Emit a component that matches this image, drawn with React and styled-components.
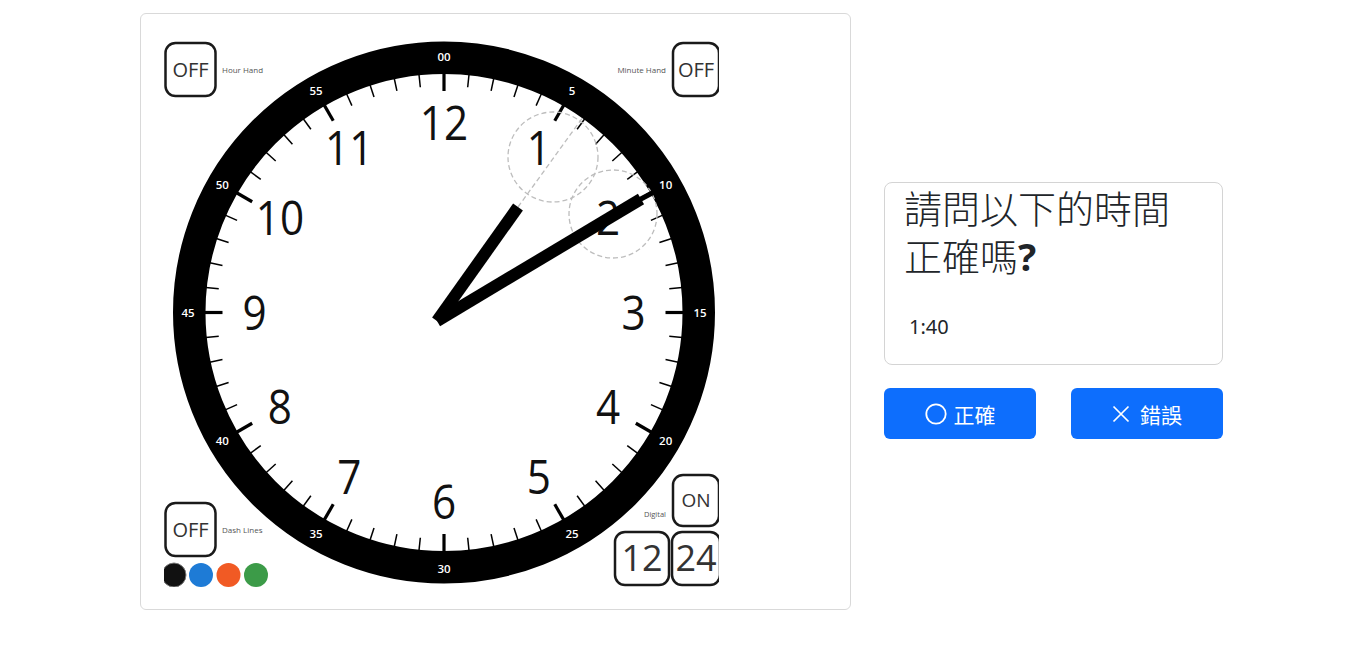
import React from 'react';
import styled, { createGlobalStyle } from 'styled-components';

const GlobalStyle = createGlobalStyle`
  body {
    margin: 0;
    background: #ffffff;
    color: #212529;
    font-family: "Noto Sans", "Noto Sans CJK TC", sans-serif;
  }
`;

// clock geometry, in svg coordinates (image is 555 x 549)
const CX = 280;
const CY = 274.5;
const RING_OUTER = 271;
const RING_INNER = 238.5;
const NUM_R = 189.5;
const LABEL_R = 256;

const polar = (r, deg) => {
  const a = (deg * Math.PI) / 180;
  return [CX + r * Math.sin(a), CY - r * Math.cos(a)];
};

const ticks = Array.from({ length: 60 }, (_, i) => {
  const major = i % 5 === 0;
  const [x1, y1] = polar(RING_INNER + 1, i * 6);
  const [x2, y2] = polar(major ? RING_INNER - 17 : RING_INNER - 12, i * 6);
  return { i, major, x1, y1, x2, y2 };
});

const hours = Array.from({ length: 12 }, (_, i) => {
  const h = i + 1;
  const [x, y] = polar(NUM_R, h * 30);
  return { h, x, y };
});

const minuteLabels = Array.from({ length: 12 }, (_, i) => {
  const [x, y] = polar(LABEL_R, i * 30);
  return { text: i === 0 ? '00' : String(i * 5), x, y };
});

function ToggleBox({ x, y, w, h, label, size }) {
  return (
    <g>
      <rect
        x={x}
        y={y}
        width={w}
        height={h}
        rx="10"
        fill="#fff"
        stroke="#1a1a1a"
        strokeWidth="2.5"
      />
      <text
        x={x + w / 2}
        y={y + h / 2 + size * 0.36}
        textAnchor="middle"
        fontSize={size}
        fill="#333"
        fontFamily="'Open Sans', sans-serif"
      >
        {label}
      </text>
    </g>
  );
}

function Clock() {
  return (
    <svg width="555" height="549" viewBox="0 0 555 549">
      <rect width="555" height="549" fill="#fff" />
      <circle
        cx={CX}
        cy={CY}
        r={(RING_OUTER + RING_INNER) / 2}
        fill="none"
        stroke="#000"
        strokeWidth={RING_OUTER - RING_INNER}
      />
      {ticks.map((t) => (
        <line
          key={t.i}
          x1={t.x1}
          y1={t.y1}
          x2={t.x2}
          y2={t.y2}
          stroke="#000"
          strokeWidth={t.major ? 3.2 : 1.5}
        />
      ))}
      {minuteLabels.map((l) => (
        <text
          key={l.text}
          x={l.x}
          y={l.y + 4}
          textAnchor="middle"
          fontSize="11.5"
          fontWeight="600"
          fill="#fff"
          fontFamily="'Open Sans', sans-serif"
        >
          {l.text}
        </text>
      ))}

      {/* dashed helper lines */}
      <g fill="none" stroke="#bdbdbd" strokeWidth="1.3" strokeDasharray="5 3">
        <circle cx="389" cy="119" r="45" />
        <circle cx="449" cy="176" r="44" />
        <line x1="354" y1="169" x2="418" y2="80.5" />
      </g>

      {hours.map((n) => (
        <g key={n.h} transform={`translate(${n.x} ${n.y}) scale(0.88 1)`}>
          <text
            x="0"
            y="17"
            textAnchor="middle"
            fontSize="48"
            fill="#111"
            fontFamily="'Open Sans', sans-serif"
          >
            {n.h}
          </text>
        </g>
      ))}

      {/* hands */}
      <line x1="273" y1="283" x2="354" y2="169" stroke="#000" strokeWidth="12" />
      <line x1="273" y1="283" x2="477" y2="161" stroke="#000" strokeWidth="12" />
      <line x1="476" y1="161.5" x2="490" y2="154" stroke="#000" strokeWidth="5" />

      {/* controls */}
      <ToggleBox x={1.5} y={5} w={50} h={53} label="OFF" size={20} />
      <text x="58" y="35" fontSize="8" fill="#555" fontFamily="'Open Sans', sans-serif">
        Hour Hand
      </text>
      <text
        x="502"
        y="35"
        textAnchor="end"
        fontSize="8"
        fill="#555"
        fontFamily="'Open Sans', sans-serif"
      >
        Minute Hand
      </text>
      <ToggleBox x={509} y={5} w={46} h={53} label="OFF" size={20} />

      <ToggleBox x={1.5} y={465} w={50} h={53} label="OFF" size={20} />
      <text x="58" y="495" fontSize="8" fill="#555" fontFamily="'Open Sans', sans-serif">
        Dash Lines
      </text>
      <circle cx="10" cy="537" r="12" fill="#111" stroke="#777" strokeWidth="1" />
      <circle cx="37" cy="537" r="12" fill="#1e7bd6" />
      <circle cx="64.5" cy="537" r="12" fill="#f15a24" />
      <circle cx="92" cy="537" r="12" fill="#3c9b48" />

      <text
        x="502"
        y="479"
        textAnchor="end"
        fontSize="7.5"
        fill="#555"
        fontFamily="'Open Sans', sans-serif"
      >
        Digital
      </text>
      <ToggleBox x={509} y={437} w={46} h={51} label="ON" size={19} />
      <ToggleBox x={451} y={494} w={54} h={53} label="12" size={36} />
      <ToggleBox x={508} y={494} w={48} h={53} label="24" size={36} />
    </svg>
  );
}

function CircleIcon() {
  return (
    <svg width="22" height="22" viewBox="0 0 22 22">
      <circle cx="11" cy="11" r="9.7" fill="none" stroke="#fff" strokeWidth="1.8" />
    </svg>
  );
}

function CrossIcon() {
  return (
    <svg width="18" height="18" viewBox="0 0 18 18">
      <path d="M1.5 1.5 L16.5 16.5 M16.5 1.5 L1.5 16.5" stroke="#fff" strokeWidth="1.7" />
    </svg>
  );
}

export default function App() {
  return (
    <>
      <GlobalStyle />
      <Page>
        <ClockCard>
          <ClockFrame>
            <Clock />
          </ClockFrame>
        </ClockCard>
        <Side>
          <QuestionCard>
            <Title>
              請問以下的時間正確嗎<Mark>?</Mark>
            </Title>
            <TimeText>1:40</TimeText>
          </QuestionCard>
          <ButtonRow>
            <AnswerButton>
              <CircleIcon />
              正確
            </AnswerButton>
            <AnswerButton $gap={10}>
              <CrossIcon />
              錯誤
            </AnswerButton>
          </ButtonRow>
        </Side>
      </Page>
    </>
  );
}

const Page = styled.div`
  display: flex;
  align-items: center;
  gap: 33px;
  padding: 13px 0 0 140px;
`;

const ClockCard = styled.div`
  box-sizing: border-box;
  width: 711px;
  height: 597px;
  padding: 24px 0 0 23px;
  border: 1px solid #d9d9d9;
  border-radius: 6px;
  background: #fff;
`;

const ClockFrame = styled.div`
  width: 555px;
  height: 549px;
  overflow: hidden;
  svg {
    display: block;
  }
`;

const Side = styled.div`
  display: flex;
  flex-direction: column;
  width: 339px;
  margin-top: -2px;
`;

const QuestionCard = styled.div`
  border: 1px solid #d4d4d4;
  border-radius: 8px;
  padding: 0 19px 22px;
`;

const Title = styled.h1`
  margin: 0;
  font-family: "Noto Sans CJK TC", "Noto Sans", sans-serif;
  font-size: 38px;
  font-weight: 300;
  line-height: 48px;
  color: #212529;
`;

const Mark = styled.span`
  font-family: "Noto Sans", sans-serif;
  font-weight: 700;
`;

const TimeText = styled.p`
  margin: 32px 0 0;
  padding-left: 5px;
  font-size: 20px;
  line-height: 30px;
`;

const ButtonRow = styled.div`
  display: grid;
  grid-template-columns: 152px 152px;
  gap: 35px;
  margin-top: 23px;
`;

const AnswerButton = styled.button`
  display: flex;
  align-items: center;
  justify-content: center;
  gap: ${(props) => props.$gap || 7}px;
  height: 51px;
  border: none;
  border-radius: 6px;
  background: #0d6efd;
  color: #fff;
  font-family: "Noto Sans CJK TC", "Noto Sans", sans-serif;
  font-size: 21px;
  cursor: pointer;
`;
